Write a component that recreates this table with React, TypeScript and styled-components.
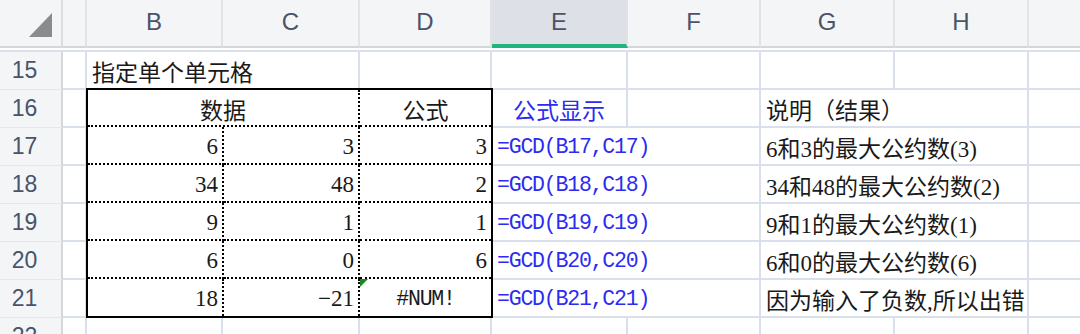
import React from 'react';
import styled, { createGlobalStyle } from 'styled-components';

const GlobalStyle = createGlobalStyle`
  html, body {
    margin: 0;
    padding: 0;
    background: #fff;
  }
  body {
    width: 1080px;
    height: 334px;
    overflow: hidden;
  }
`;

// row head, A, B, C, D, E, F, G, H, I
const COLS = '63px 24px 136px 137px 132px 136px 133px 134px 134px 134px';
const GRID = '#d9e0eb';
const HEAD_BG = '#f4f5f7';
const MONO = "'Liberation Mono', 'Noto Sans CJK SC', monospace";
const SERIF = "'Liberation Serif', 'Noto Sans CJK SC', serif";

type DataRow = {
  n: number;
  b: string;
  c: string;
  d: string;
  formula: string;
  note: string;
  err?: boolean;
};

const dataRows: DataRow[] = [
  { n: 17, b: '6', c: '3', d: '3', formula: '=GCD(B17,C17)', note: '6和3的最大公约数(3)' },
  { n: 18, b: '34', c: '48', d: '2', formula: '=GCD(B18,C18)', note: '34和48的最大公约数(2)' },
  { n: 19, b: '9', c: '1', d: '1', formula: '=GCD(B19,C19)', note: '9和1的最大公约数(1)' },
  { n: 20, b: '6', c: '0', d: '6', formula: '=GCD(B20,C20)', note: '6和0的最大公约数(6)' },
  { n: 21, b: '18', c: '−21', d: '#NUM!', formula: '=GCD(B21,C21)', note: '因为输入了负数,所以出错', err: true },
];

// the last column (I) is off screen, its letter is not shown
const letters = ['', 'B', 'C', 'D', 'E', 'F', 'G', 'H', ''];

const App = () => {
  return (
    <>
      <GlobalStyle />
      <Sheet>
        <HeaderRow>
          <Corner>
            <svg width="24" height="24" viewBox="0 0 24 24">
              <polygon points="23,0 23,24 0,24" fill="#8b8b8d" />
            </svg>
          </Corner>
          {letters.map((l, i) => (
            <ColHead key={i} $active={l === 'E'}>
              {l}
            </ColHead>
          ))}
        </HeaderRow>

        <Body>
          {[15, 16, 17, 18, 19, 20, 21, 22].map((n, i) => (
            <RowHead key={n} $row={i + 1}>
              {n}
            </RowHead>
          ))}
          {[1, 2, 3, 4, 5, 6, 7, 8].map((r) => (
            <Cell key={'a' + r} $col={2} $row={r} />
          ))}

          {/* row 15 */}
          <Cell $col={3} $span={2} $row={1}>
            指定单个单元格
          </Cell>
          {[5, 6, 7, 8, 9, 10].map((c) => (
            <Cell key={'r15' + c} $col={c} $row={1} />
          ))}

          {/* row 16 */}
          <Cell $col={6} $row={2} $align="center" $blue>
            公式显示
          </Cell>
          <Cell $col={7} $row={2} />
          <Cell $col={8} $span={2} $row={2}>
            说明（结果）
          </Cell>
          <Cell $col={10} $row={2} />

          {/* rows 17 - 21 */}
          {dataRows.map((d, i) => (
            <React.Fragment key={d.n}>
              <Cell $col={6} $span={2} $row={i + 3} $blue $mono>
                {d.formula}
              </Cell>
              <Cell $col={8} $span={2} $row={i + 3}>
                {d.note}
              </Cell>
              <Cell $col={10} $row={i + 3} />
            </React.Fragment>
          ))}

          {/* row 22 */}
          {[3, 4, 5, 6, 7, 8, 9, 10].map((c) => (
            <Cell key={'r22' + c} $col={c} $row={8} />
          ))}

          <Block>
            <BlockCell $span={2} $align="center">
              数据
            </BlockCell>
            <BlockCell $last $align="center">
              公式
            </BlockCell>
            {dataRows.map((d, i) => {
              const bottom = i === dataRows.length - 1;
              return (
                <React.Fragment key={d.n}>
                  <BlockCell $bottom={bottom} $align="flex-end">
                    {d.b}
                  </BlockCell>
                  <BlockCell $bottom={bottom} $align="flex-end">
                    {d.c}
                  </BlockCell>
                  <BlockCell
                    $bottom={bottom}
                    $last
                    $align={d.err ? 'center' : 'flex-end'}
                    $mono={d.err}
                  >
                    {d.err && <ErrorMark />}
                    {d.d}
                  </BlockCell>
                </React.Fragment>
              );
            })}
          </Block>
        </Body>
      </Sheet>
    </>
  );
};

export default App;

const Sheet = styled.div`
  width: 1080px;
  height: 334px;
  overflow: hidden;
  background: #fff;
`;

const HeaderRow = styled.div`
  display: grid;
  grid-template-columns: ${COLS};
  height: 48px;
  background: ${HEAD_BG};
`;

const Corner = styled.div`
  box-sizing: border-box;
  display: flex;
  justify-content: flex-end;
  align-items: flex-start;
  padding: 13px 8px 0 0;
  border-right: 2px solid #dcdde0;
  border-bottom: 2px solid #d5d6d8;
`;

const ColHead = styled.div<{ $active?: boolean }>`
  box-sizing: border-box;
  display: flex;
  align-items: center;
  justify-content: center;
  padding-bottom: ${(p) => (p.$active ? '0' : '2px')};
  border-right: 2px solid #e2e3e6;
  border-bottom: ${(p) => (p.$active ? '4px solid #1fb47b' : '2px solid #d5d6d8')};
  background: ${(p) => (p.$active ? '#dde0e7' : HEAD_BG)};
  font-family: 'Liberation Sans', Arial, sans-serif;
  font-size: 24px;
  color: #4a5368;
`;

const Body = styled.div`
  display: grid;
  grid-template-columns: ${COLS};
  grid-template-rows: repeat(8, 38px);
  margin-top: 2px;
  border-top: 2px solid ${GRID};
`;

const RowHead = styled.div<{ $row: number }>`
  grid-column: 1;
  grid-row: ${(p) => p.$row};
  box-sizing: border-box;
  display: flex;
  align-items: center;
  justify-content: center;
  padding-right: 12px;
  background: ${HEAD_BG};
  border-right: 2px solid #d6d7d9;
  border-bottom: 1px solid #e4e7ed;
  font-family: 'Liberation Sans', Arial, sans-serif;
  font-size: 23px;
  color: #4a5368;
`;

const Cell = styled.div<{
  $col: number;
  $row: number;
  $span?: number;
  $align?: string;
  $blue?: boolean;
  $mono?: boolean;
}>`
  grid-column: ${(p) => p.$col} / span ${(p) => p.$span ?? 1};
  grid-row: ${(p) => p.$row};
  box-sizing: border-box;
  display: flex;
  align-items: center;
  justify-content: ${(p) => p.$align ?? 'flex-start'};
  padding: 2px 5px 0;
  border-right: 2px solid ${GRID};
  border-bottom: 2px solid ${GRID};
  white-space: nowrap;
  font-family: ${(p) => (p.$mono ? MONO : SERIF)};
  font-size: ${(p) => (p.$mono ? '21.5px' : '23px')};
  letter-spacing: ${(p) => (p.$mono ? '-1.2px' : 'normal')};
  color: ${(p) => (p.$blue ? '#2b2bf2' : '#1a1a1a')};
`;

const Block = styled.div`
  grid-column: 3 / span 3;
  grid-row: 2 / span 6;
  margin: -2px -1px 0 -1px;
  box-sizing: border-box;
  border: 2px solid #000;
  background: #fff;
  display: grid;
  grid-template-columns: 136px 136px 1fr;
  grid-template-rows: 37px repeat(4, 38px) 1fr;
`;

const BlockCell = styled.div<{
  $span?: number;
  $align?: string;
  $last?: boolean;
  $bottom?: boolean;
  $mono?: boolean;
}>`
  position: relative;
  grid-column: span ${(p) => p.$span ?? 1};
  box-sizing: border-box;
  display: flex;
  align-items: center;
  justify-content: ${(p) => p.$align ?? 'flex-start'};
  padding: 3px 4px 0;
  border-right: ${(p) => (p.$last ? 'none' : '2px dotted #000')};
  border-bottom: ${(p) => (p.$bottom ? 'none' : '2px dotted #000')};
  white-space: nowrap;
  font-family: ${(p) => (p.$mono ? MONO : SERIF)};
  font-size: ${(p) => (p.$mono ? '21.5px' : '23px')};
  letter-spacing: ${(p) => (p.$mono ? '-1.2px' : 'normal')};
  color: #1a1a1a;
`;

const ErrorMark = styled.span`
  position: absolute;
  top: 0;
  left: 0;
  width: 0;
  height: 0;
  border-top: 8px solid #17871f;
  border-right: 8px solid transparent;
`;
